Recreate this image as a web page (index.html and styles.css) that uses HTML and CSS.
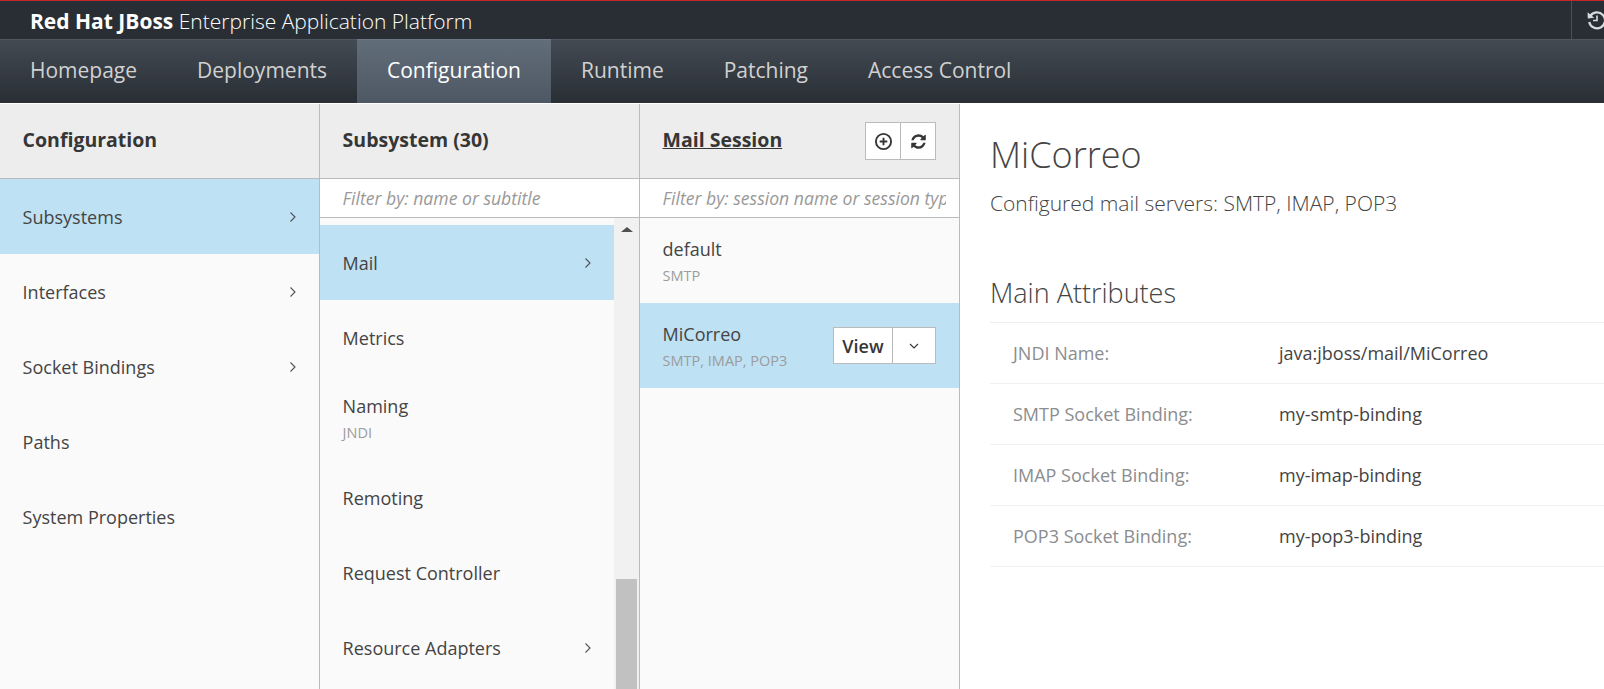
FILE: index.html
```html
<!DOCTYPE html>
<html lang="en">
<head>
<meta charset="utf-8">
<title>Red Hat JBoss Enterprise Application Platform</title>
<link rel="stylesheet" href="styles.css">
</head>
<body>
<header class="masthead">
  <div class="brand"><b>Red Hat JBoss</b> Enterprise Application Platform</div>
  <div class="tools">
    <svg class="history" viewBox="0 0 20 20" width="20" height="20"><path d="M3.2 6.2A8 8 0 1 1 2.2 12" fill="none" stroke="#d8dbde" stroke-width="2.2"/><path d="M0.6 2.2 L7.2 7.8 L0.8 8.4 Z" fill="#d8dbde"/><path d="M10 5.5V10.5H6" fill="none" stroke="#d8dbde" stroke-width="1.6"/></svg>
  </div>
</header>
<nav class="nav">
  <a class="tab">Homepage</a>
  <a class="tab">Deployments</a>
  <a class="tab active">Configuration</a>
  <a class="tab">Runtime</a>
  <a class="tab">Patching</a>
  <a class="tab">Access Control</a>
</nav>
<main class="finder">
  <section class="col col-1">
    <div class="col-head"><h2>Configuration</h2></div>
    <ul class="items">
      <li class="item selected"><span class="name">Subsystems</span><svg class="chev" viewBox="0 0 8 12" width="8" height="12"><path d="M1.500 1.500 6 6l-4.500 4.500" /></svg></li>
      <li class="item"><span class="name">Interfaces</span><svg class="chev" viewBox="0 0 8 12" width="8" height="12"><path d="M1.500 1.500 6 6l-4.500 4.500" /></svg></li>
      <li class="item"><span class="name">Socket Bindings</span><svg class="chev" viewBox="0 0 8 12" width="8" height="12"><path d="M1.500 1.500 6 6l-4.500 4.500" /></svg></li>
      <li class="item"><span class="name">Paths</span></li>
      <li class="item"><span class="name">System Properties</span></li>
    </ul>
  </section>
  <section class="col col-2">
    <div class="col-head"><h2>Subsystem (30)</h2></div>
    <div class="filter"><span>Filter by: name or subtitle</span></div>
    <div class="scroller">
      <ul class="items with-bar">
        <li class="item selected"><span class="name">Mail</span><svg class="chev" viewBox="0 0 8 12" width="8" height="12"><path d="M1.500 1.500 6 6l-4.500 4.500" /></svg></li>
        <li class="item"><span class="name">Metrics</span></li>
        <li class="item tall"><span class="stack"><span class="name">Naming</span><small>JNDI</small></span></li>
        <li class="item"><span class="name">Remoting</span></li>
        <li class="item"><span class="name">Request Controller</span></li>
        <li class="item"><span class="name">Resource Adapters</span><svg class="chev" viewBox="0 0 8 12" width="8" height="12"><path d="M1.500 1.500 6 6l-4.500 4.500" /></svg></li>
      </ul>
      <div class="scrollbar"><span class="arrow"></span><span class="thumb"></span></div>
    </div>
  </section>
  <section class="col col-3">
    <div class="col-head">
      <h2><u>Mail Session</u></h2>
      <div class="btn-group">
        <button class="btn icon"><svg viewBox="0 0 20 20" width="19" height="19"><circle cx="10" cy="10" r="8" fill="none" stroke="#363636" stroke-width="2"/><path d="M10 6v8M6 10h8" stroke="#363636" stroke-width="2"/></svg></button>
        <button class="btn icon"><svg viewBox="0 0 1792 1792" width="17" height="17"><path fill="#363636" d="M1639 1056q0 5-1 7-64 268-268 434.500t-478 166.500q-146 0-282.500-55t-243.500-157l-129 129q-19 19-45 19t-45-19-19-45v-448q0-26 19-45t45-19h448q26 0 45 19t19 45-19 45l-137 137q71 66 161 102t187 36q134 0 250-65t186-179q11-17 53-117 8-23 30-23h192q13 0 22.500 9.500t9.500 22.500zm25-800v448q0 26-19 45t-45 19h-448q-26 0-45-19t-19-45 19-45l138-138q-148-137-349-137-134 0-250 65t-186 179q-11 17-53 117-8 23-30 23h-199q-13 0-22.500-9.500t-9.500-22.500v-7q65-268 270-434.500t480-166.500q146 0 284 55.500t245 156.500l130-129q19-19 45-19t45 19 19 45z"/></svg></button>
      </div>
    </div>
    <div class="filter"><span>Filter by: session name or session type</span></div>
    <ul class="items">
      <li class="item tall-s"><span class="stack"><span class="name">default</span><small>SMTP</small></span></li>
      <li class="item tall-s selected"><span class="stack"><span class="name">MiCorreo</span><small>SMTP, IMAP, POP3</small></span>
        <div class="btn-group">
          <button class="btn view">View</button>
          <button class="btn caret"><svg viewBox="0 0 12 8" width="12" height="8"><path d="M2 2l4 4 4-4" fill="none" stroke="#363636" stroke-width="1.100"/></svg></button>
        </div>
      </li>
    </ul>
  </section>
  <section class="detail">
    <h1>MiCorreo</h1>
    <p class="lead">Configured mail servers: SMTP, IMAP, POP3</p>
    <h3>Main Attributes</h3>
    <dl class="attrs">
      <div class="attr"><dt>JNDI Name:</dt><dd>java:jboss/mail/MiCorreo</dd></div>
      <div class="attr"><dt>SMTP Socket Binding:</dt><dd>my-smtp-binding</dd></div>
      <div class="attr"><dt>IMAP Socket Binding:</dt><dd>my-imap-binding</dd></div>
      <div class="attr"><dt>POP3 Socket Binding:</dt><dd>my-pop3-binding</dd></div>
    </dl>
  </section>
</main>
</body>
</html>
```
FILE: styles.css
```css
* { box-sizing: border-box; }
html, body { height: 100%; }
body {
  margin: 0;
  height: 689px;
  overflow: hidden;
  display: flex;
  flex-direction: column;
  font-family: "Open Sans", sans-serif;
  font-size: 18px;
  color: #363636;
  background: #fff;
}
.masthead {
  flex: 0 0 39px;
  min-height: 0;
  overflow: hidden;
  display: flex;
  justify-content: space-between;
  background: #292e34;
  border-top: 1px solid #c6262e;
  color: #fff;
}
.brand { padding-left: 30px; font-size: 21px; font-weight: 300; line-height: 40px; }
.brand b { font-weight: 700; }
.tools {
  width: 33px;
  border-left: 1px solid #4a5058;
  padding: 9px 0 0 15px;
  overflow: hidden;
}
.history { display: block; }
.nav {
  flex: 0 0 64px;
  display: flex;
  background: linear-gradient(#434a53, #292e34);
  border-top: 1px solid #4f565f;
}
.tab {
  padding: 0 30px;
  font-size: 21px;
  line-height: 60px;
  color: #d1d1d1;
}
.tab.active {
  margin-top: -1px;
  color: #fff;
  border-top: 1px solid #6d7884;
  background: linear-gradient(#626d7a, #4e5864);
}
.finder { flex: 1; min-height: 0; display: flex; border-top: 1px solid #fff; }
.col {
  flex: 0 0 320px;
  display: flex;
  flex-direction: column;
  min-height: 0;
  background: #fafafa;
  border-right: 1px solid #bbb;
  overflow: hidden;
}
.col-head {
  flex: 0 0 75px;
  display: flex;
  align-items: center;
  justify-content: space-between;
  padding: 0 23px 0 22.6px;
  background: #ededed;
  border-bottom: 1px solid #bbb;
}
.col-head h2 { margin: 0 0 3px; font-size: 19.5px; font-weight: 700; color: #363636; }
.filter {
  flex: 0 0 39px;
  display: flex;
  align-items: center;
  padding: 0 13px 0 22.6px;
  background: #fff;
  border-bottom: 1px solid #bbb;
  font-size: 17.6px;
  font-style: italic;
  color: #999;
  white-space: nowrap;
  overflow: hidden;
}
.filter span { display: block; overflow: hidden; }
.items { list-style: none; margin: 0; padding: 0; }
.item {
  height: 75px;
  display: flex;
  align-items: center;
  justify-content: space-between;
  padding: 0 22px 0 22.6px;
  color: #444;
}
.item.selected { background: #bee1f4; }
.tall { height: 85px; }
.tall-s { height: 85px; }
.col-3 .item { padding-right: 23px; }
.stack { display: flex; flex-direction: column; gap: 5px; }
.stack small { font-size: 14.5px; color: #9c9c9c; }
.chev { fill: none; stroke: #4d5258; stroke-width: 1.1; }
.scroller { flex: 1; min-height: 0; position: relative; padding-top: 7px; overflow: hidden; }
.with-bar { margin-right: 25px; }
.scrollbar {
  position: absolute;
  top: 0;
  right: 0;
  bottom: 0;
  width: 25px;
  background: #f1f1f1;
}
.arrow {
  position: absolute;
  top: 9px;
  left: 7px;
  border: 6px solid transparent;
  border-top: 0;
  border-bottom: 5px solid #505050;
}
.thumb {
  position: absolute;
  top: 361px;
  bottom: 0;
  left: 2px;
  width: 21px;
  background: #c1c1c1;
}
.btn-group { display: flex; }
.btn {
  height: 38px;
  margin: 0;
  padding: 0;
  display: flex;
  align-items: center;
  justify-content: center;
  font: 600 18px "Open Sans", sans-serif;
  color: #363636;
  background: #fff;
  border: 1px solid #bbb;
}
.btn + .btn { border-left: 0; }
.icon { width: 36px; }
.icon + .icon { width: 35px; }
.view { width: 60px; height: 37px; }
.caret { width: 43px; height: 37px; }
.detail { flex: 1; min-width: 0; padding: 0 0 0 30px; overflow: hidden; }
.detail h1 { margin: 28px 0 0; font-size: 36px; font-weight: 300; line-height: 46px; color: #444; }
.lead { margin: 12px 0 0; font-size: 21px; font-weight: 300; line-height: 26px; color: #444; }
.detail h3 { margin: 61px 0 0; font-size: 27px; font-weight: 300; line-height: 32px; color: #444; }
.attrs { margin: 13px 0 0; border-top: 1px solid #eee; }
.attr {
  height: 61px;
  display: flex;
  align-items: center;
  padding-left: 23px;
  border-bottom: 1px solid #f1f1f1;
}
.attr dt { flex: 0 0 266px; color: #8b8d8f; }
.attr dd { margin: 0; color: #444; }
```
